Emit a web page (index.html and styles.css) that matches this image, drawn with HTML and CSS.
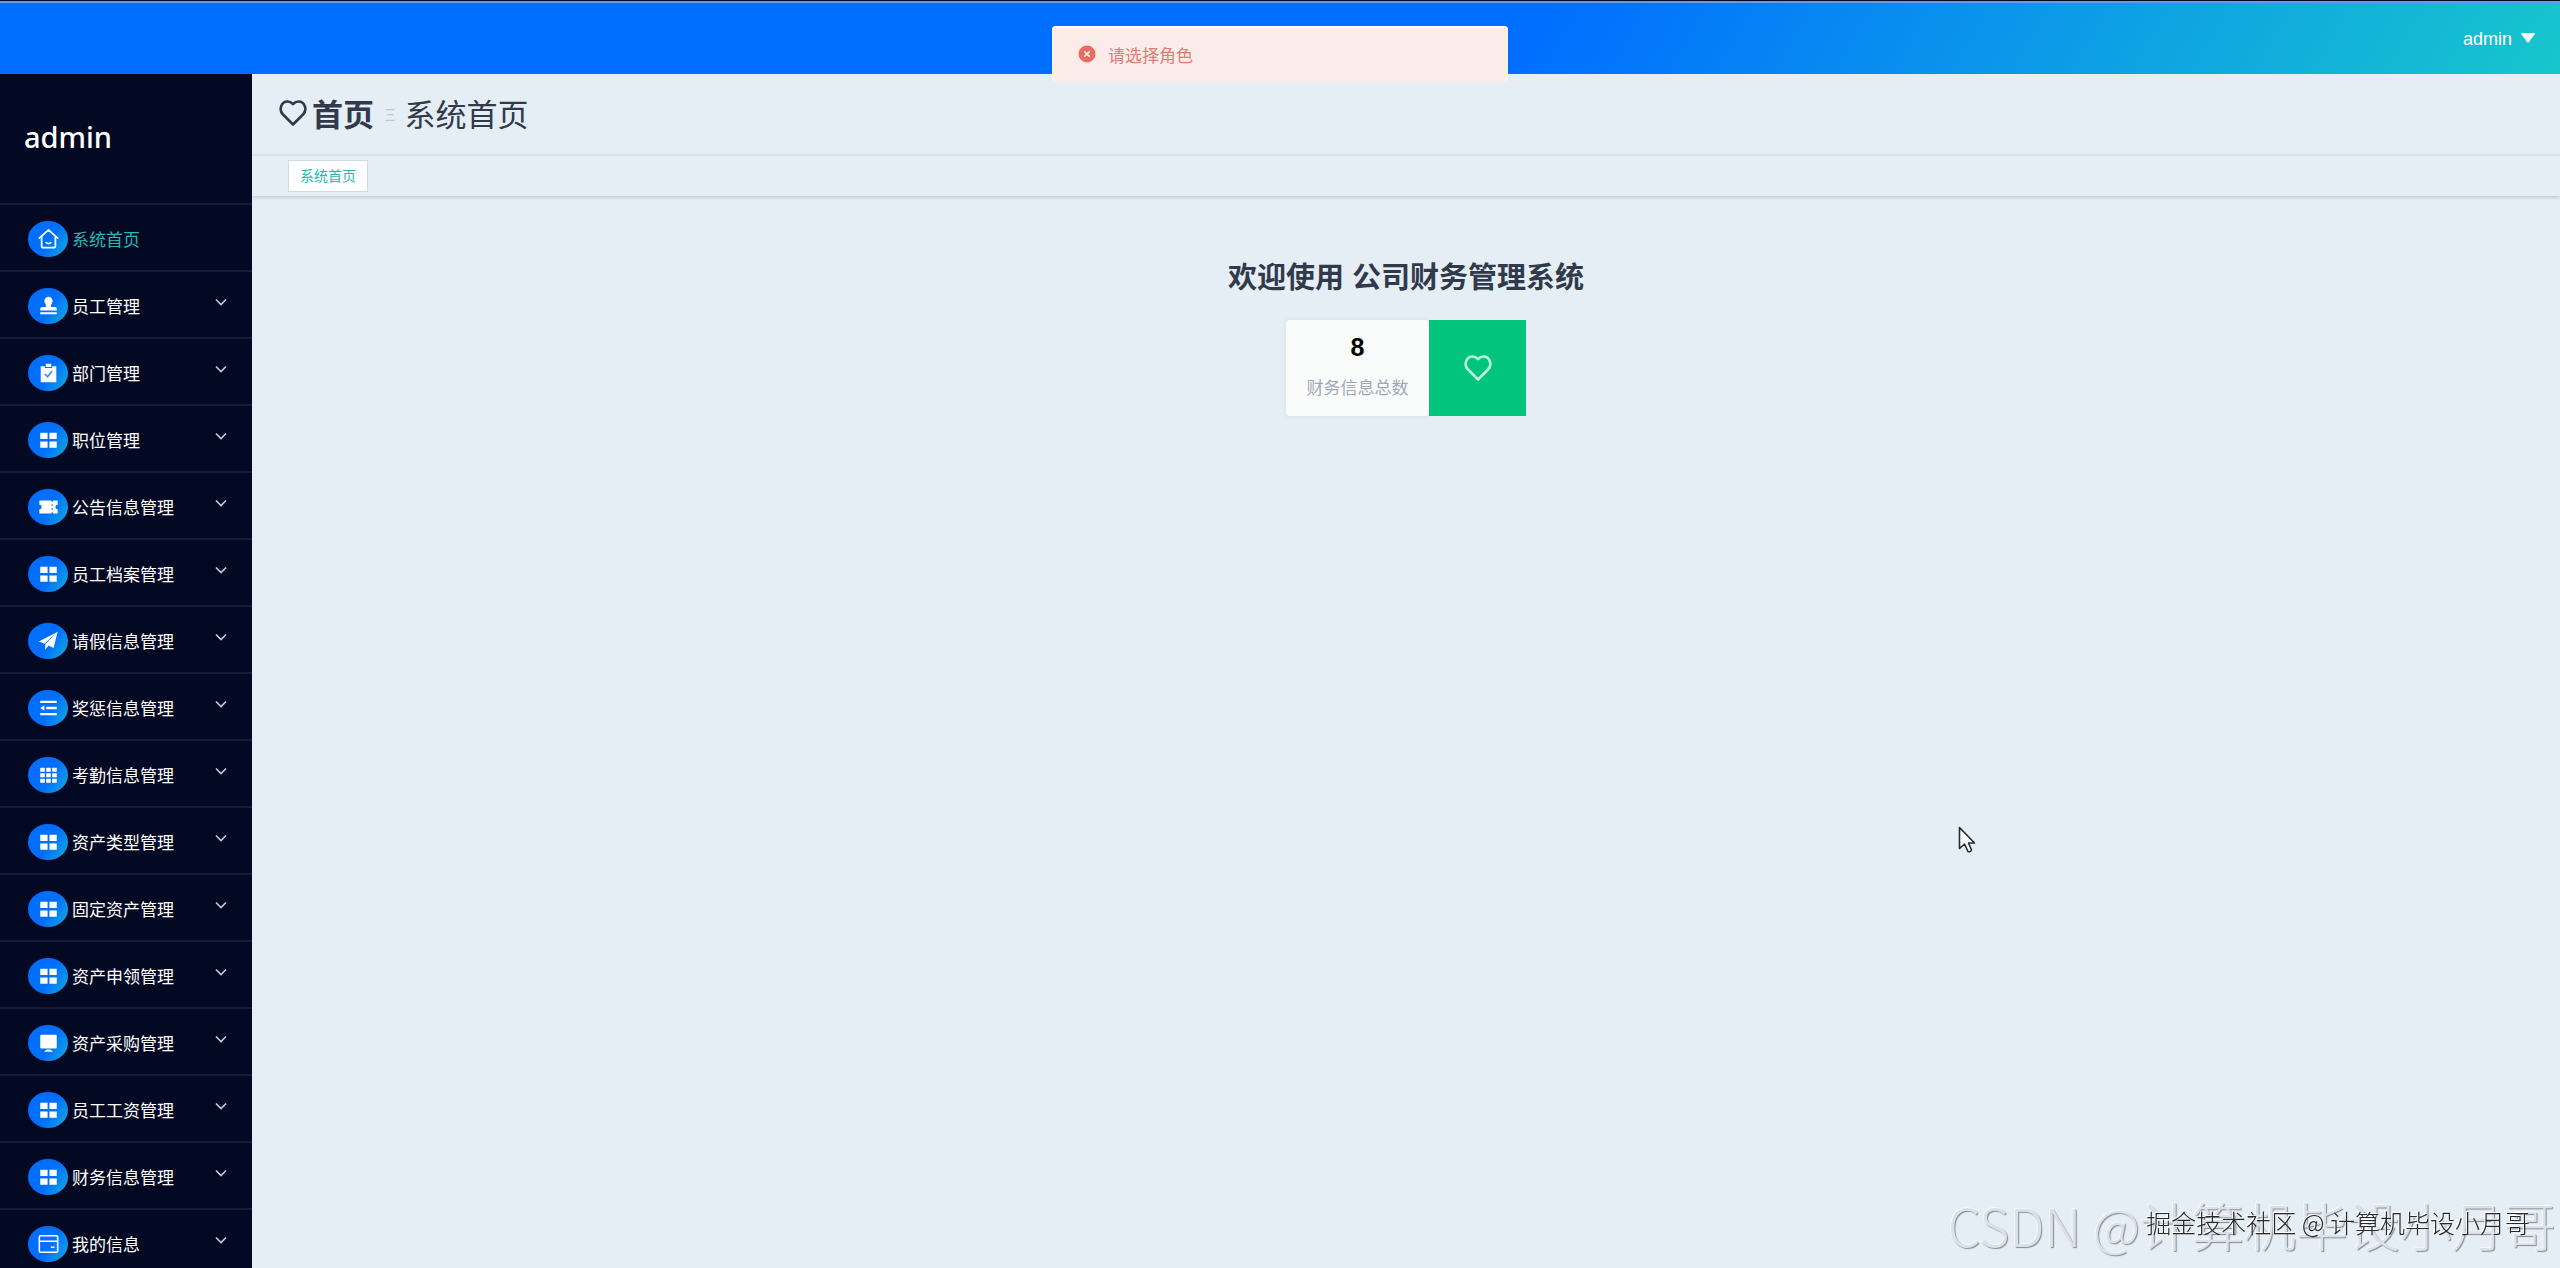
FILE: index.html
```
<!DOCTYPE html>
<html lang="zh-CN">
<head>
  <meta charset="utf-8">
  <title>公司财务管理系统</title>
  <link rel="stylesheet" href="styles.css">
</head>

<body>
<!-- shared icons -->
<svg class="sprite" aria-hidden="true">
  <symbol id="i-house" viewBox="0 0 24 24"><path d="M2 11 12 2l10 9M4.500 9v10.500a2 2 0 0 0 2 2h11a2 2 0 0 0 2-2V9M9.500 16q2.500 2 5 0" fill="none" stroke="currentColor" stroke-width="1.900" stroke-linecap="round" stroke-linejoin="round"/></symbol>
  <symbol id="i-stamp" viewBox="0 0 24 24"><path d="M12 2a4.500 4.500 0 0 1 3.800 7c-1.200 2-1.200 3-1 4H19q2 0 2 2v2H3v-2q0-2 2-2h4.200c.2-1 .2-2-1-4A4.500 4.500 0 0 1 12 2ZM3 18.800h18V21H3Z" fill="currentColor"/></symbol>
  <symbol id="i-claim" viewBox="0 0 24 24"><path d="M3.500 4.500H8v2h8v-2h4.500V22h-17ZM9 2h6v3.500H9Z" fill="currentColor"/><path d="m8 13 3 3 5-6" fill="none" stroke="#1b7cf5" stroke-width="1.500"/></symbol>
  <symbol id="i-menu" viewBox="0 0 24 24"><path d="M3 4h8v7H3ZM13 4h8v7h-8ZM3 13.500h8v7H3ZM13 13.500h8v7h-8Z" fill="currentColor"/></symbol>
  <symbol id="i-ticket" viewBox="0 0 24 24"><path d="M2 5h13l1 2 1-2h5v4.500a2.500 2.500 0 0 0 0 5V19h-5l-1-2-1 2H2v-4.500a2.500 2.500 0 0 0 0-5Z" fill="currentColor"/><path d="M16 9v2M16 13v2" stroke="#1b7cf5" stroke-width="1.200"/></symbol>
  <symbol id="i-plane" viewBox="0 0 24 24"><path d="M22 2 1.500 12.500l6 2.500ZM22 2 8.500 15.500v6l3.500-4.500 5.500 2.500Z" fill="currentColor"/></symbol>
  <symbol id="i-fold" viewBox="0 0 24 24"><path d="M3 4h18v2.500H3ZM9.500 10.700H21v2.600H9.500ZM3 17.500h18V20H3ZM3 12l4.500-3v6Z" fill="currentColor"/></symbol>
  <symbol id="i-grid" viewBox="0 0 24 24"><path d="M3 4h5v4.500H3ZM9.500 4h5v4.500h-5ZM16 4h5v4.500h-5ZM3 10h5v4.500H3ZM9.500 10h5v4.500h-5ZM16 10h5v4.500h-5ZM3 16h5v4.500H3ZM9.500 16h5v4.500h-5ZM16 16h5v4.500h-5Z" fill="currentColor"/></symbol>
  <symbol id="i-monitor" viewBox="0 0 24 24"><path d="M4 3h16q1 0 1 1v13q0 1-1 1H4q-1 0-1-1V4q0-1 1-1ZM10 19h4l3 2.500H7Z" fill="currentColor"/></symbol>
  <symbol id="i-card" viewBox="0 0 24 24"><path d="M3.500 3h17Q22 3 22 4.500v15q0 1.500-1.500 1.500h-17Q2 21 2 19.500v-15Q2 3 3.500 3ZM2 9h20M14.500 15.500h4" fill="none" stroke="currentColor" stroke-width="1.700"/></symbol>
  <symbol id="i-heart" viewBox="0 0 28 26"><path d="M14 24.500 4 14.500C-.5 10 2 1.500 8.500 1.500c2.500 0 4 1 5.500 2.500 1.500-1.500 3-2.500 5.500-2.500 6.500 0 9 8.500 4.500 13Z" fill="none" stroke="currentColor" stroke-width="2.600" stroke-linejoin="round"/></symbol>
  <symbol id="i-down" viewBox="0 0 12 8"><path d="m1 1.500 5 5 5-5" fill="none" stroke="currentColor" stroke-width="1.600"/></symbol>
</svg>

<header class="header">
  <button class="user" type="button">admin
    <svg class="caret" viewBox="0 0 14 10"><path d="M1 0h12q1.500 0 .5 1.500L8 9q-1 1-2 0L.5 1.500Q-.5 0 1 0Z" fill="currentColor"/></svg>
  </button>
</header>

<div class="layout">
  <aside class="sidebar">
    <div class="username">admin</div>
    <nav class="menu">
      <a class="menu-item active" href="#"><span class="icon"><svg><use href="#i-house"/></svg></span>系统首页</a>
      <a class="menu-item" href="#"><span class="icon"><svg><use href="#i-stamp"/></svg></span>员工管理<svg class="arrow"><use href="#i-down"/></svg></a>
      <a class="menu-item" href="#"><span class="icon"><svg><use href="#i-claim"/></svg></span>部门管理<svg class="arrow"><use href="#i-down"/></svg></a>
      <a class="menu-item" href="#"><span class="icon"><svg><use href="#i-menu"/></svg></span>职位管理<svg class="arrow"><use href="#i-down"/></svg></a>
      <a class="menu-item" href="#"><span class="icon"><svg><use href="#i-ticket"/></svg></span>公告信息管理<svg class="arrow"><use href="#i-down"/></svg></a>
      <a class="menu-item" href="#"><span class="icon"><svg><use href="#i-menu"/></svg></span>员工档案管理<svg class="arrow"><use href="#i-down"/></svg></a>
      <a class="menu-item" href="#"><span class="icon"><svg><use href="#i-plane"/></svg></span>请假信息管理<svg class="arrow"><use href="#i-down"/></svg></a>
      <a class="menu-item" href="#"><span class="icon"><svg><use href="#i-fold"/></svg></span>奖惩信息管理<svg class="arrow"><use href="#i-down"/></svg></a>
      <a class="menu-item" href="#"><span class="icon"><svg><use href="#i-grid"/></svg></span>考勤信息管理<svg class="arrow"><use href="#i-down"/></svg></a>
      <a class="menu-item" href="#"><span class="icon"><svg><use href="#i-menu"/></svg></span>资产类型管理<svg class="arrow"><use href="#i-down"/></svg></a>
      <a class="menu-item" href="#"><span class="icon"><svg><use href="#i-menu"/></svg></span>固定资产管理<svg class="arrow"><use href="#i-down"/></svg></a>
      <a class="menu-item" href="#"><span class="icon"><svg><use href="#i-menu"/></svg></span>资产申领管理<svg class="arrow"><use href="#i-down"/></svg></a>
      <a class="menu-item" href="#"><span class="icon"><svg><use href="#i-monitor"/></svg></span>资产采购管理<svg class="arrow"><use href="#i-down"/></svg></a>
      <a class="menu-item" href="#"><span class="icon"><svg><use href="#i-menu"/></svg></span>员工工资管理<svg class="arrow"><use href="#i-down"/></svg></a>
      <a class="menu-item" href="#"><span class="icon"><svg><use href="#i-menu"/></svg></span>财务信息管理<svg class="arrow"><use href="#i-down"/></svg></a>
      <a class="menu-item" href="#"><span class="icon"><svg><use href="#i-card"/></svg></span>我的信息<svg class="arrow"><use href="#i-down"/></svg></a>
    </nav>
  </aside>

  <main class="main">
    <div class="breadcrumb">
      <svg class="heart"><use href="#i-heart"/></svg>
      <a class="crumb-home" href="#">首页</a>
      <span class="separator">Ξ</span>
      <span>系统首页</span>
    </div>
    <div class="tabs">
      <a class="tab" href="#">系统首页</a>
    </div>
    <section class="content">
      <h1 class="welcome">欢迎使用 公司财务管理系统</h1>
      <div class="card">
        <div class="card-info">
          <div class="card-num">8</div>
          <div class="card-label">财务信息总数</div>
        </div>
        <div class="card-icon"><svg class="heart"><use href="#i-heart"/></svg></div>
      </div>
    </section>
  </main>
</div>

<div class="message" role="alert">
  <svg class="message-icon" viewBox="0 0 18 18"><circle cx="9" cy="9" r="8.500" fill="#ec6a5e"/><path d="m6.200 6.200 5.600 5.600M11.800 6.200l-5.600 5.600" stroke="#fff" stroke-width="1.600"/></svg>
  请选择角色
</div>

<svg class="cursor" viewBox="0 0 18 28"><path d="M1.500 1.500v21l5-4.500 3.500 7.500q2.500 1 3.500-1.500L10.500 17H16.500Z" fill="#fff" stroke="#222838" stroke-width="1.600" stroke-linejoin="round"/></svg>

<div class="watermark watermark-large">CSDN @计算机毕设小月哥</div>
<div class="watermark watermark-small">掘金技术社区 @ 计算机毕设小月哥</div>
</body>
</html>
```
FILE: styles.css
```
* {
  box-sizing: border-box;
}

body {
  margin: 0;
  height: 100vh;
  display: flex;
  flex-direction: column;
  overflow: hidden;
  background: #e5edf5;
  color: #303a4b;
  font-family: "Liberation Sans", "Noto Sans CJK SC", sans-serif;
  font-size: 17px;
}

a {
  color: inherit;
  text-decoration: none;
}

.sprite {
  display: none;
}

/* header */
.header {
  flex: none;
  height: 74px;
  padding: 3px 25px 0;
  display: flex;
  justify-content: flex-end;
  align-items: center;
  border-top: 1px solid #060b26;
  box-shadow: inset 0 2px 0 #5d9df0;
  background: linear-gradient(120deg, #006fff 60%, #0c9be8 80%, #17c6cc);
}

.user {
  display: flex;
  align-items: center;
  gap: 9px;
  padding: 0;
  border: 0;
  background: none;
  color: #fff;
  font-family: inherit;
  font-size: 18px;
  cursor: pointer;
}

.caret {
  width: 14px;
  height: 10px;
  margin-bottom: 2px;
}

.layout {
  flex: 1;
  min-height: 0;
  display: flex;
}

/* sidebar */
.sidebar {
  flex: none;
  width: 252px;
  overflow: hidden;
  background: #040923;
  color: #fff;
}

.username {
  height: 129px;
  padding: 0 24px;
  font-family: "Noto Sans", sans-serif;
  font-size: 29px;
  font-weight: 500;
  line-height: 126px;
}

.menu-item {
  display: flex;
  align-items: center;
  height: 67px;
  padding: 1px 25px 0 28px;
  border-top: 2px solid #171c35;
}

.menu-item.active {
  color: #2ab5b4;
}

.icon {
  display: flex;
  align-items: center;
  justify-content: center;
  width: 40px;
  height: 36px;
  margin: 2px 4px 0 0;
  border-radius: 50%;
  background: linear-gradient(120deg, #006fff 55%, #14b0d8);
  color: #fff;
}

.icon svg {
  width: 23px;
  height: 22px;
}

.arrow {
  width: 12px;
  height: 8px;
  margin: 0 0 6px auto;
  color: #c9ccd6;
}

/* main */
.main {
  flex: 1;
  min-width: 0;
  overflow: hidden;
}

.breadcrumb {
  display: flex;
  align-items: center;
  height: 82px;
  padding: 0 27px 3px;
  border-bottom: 2px solid #dce3ea;
  font-size: 31px;
}

.heart {
  width: 28px;
  height: 26px;
}

.crumb-home {
  margin-left: 5px;
  font-weight: bold;
}

.separator {
  margin: 6px 9px 0 11px;
  color: #c0c6cf;
  font-size: 16px;
}

.tabs {
  display: flex;
  align-items: center;
  height: 40px;
  padding: 0 36px;
  box-shadow: 0 2px 3px #c5ced8;
}

.tab {
  padding: 0 11px;
  border: 1px solid #d3d9e0;
  background: #fff;
  color: #2bb5ae;
  font-size: 14px;
  line-height: 30px;
}

.content {
  display: flex;
  flex-direction: column;
  align-items: center;
  padding-top: 60px;
}

.welcome {
  margin: 0 0 20px;
  font-size: 29px;
  line-height: 44px;
}

.card {
  display: flex;
  height: 96px;
}

.card-info {
  width: 143px;
  padding-top: 11px;
  border-radius: 4px;
  background: #fafbfb;
  box-shadow: 0 0 4px #d5dce5;
  text-align: center;
}

.card-num {
  color: #000;
  font-size: 25px;
  font-weight: bold;
  line-height: 32px;
}

.card-label {
  margin-top: 14px;
  color: #a0a8b7;
  line-height: 24px;
}

.card-icon {
  display: flex;
  align-items: center;
  justify-content: center;
  width: 97px;
  background: #02c47b;
  color: #b9f7de;
}

/* message popup, over the header */
.message {
  position: fixed;
  top: 26px;
  left: 50%;
  display: flex;
  align-items: center;
  gap: 12px;
  width: 456px;
  height: 56px;
  padding: 0 26px;
  transform: translateX(-50%);
  border-radius: 4px;
  background: #fbecea;
  box-shadow: inset 0 2px 2px #fff;
  color: #df7c72;
}

.message-icon {
  width: 18px;
  height: 18px;
}

.cursor {
  position: fixed;
  top: 826px;
  left: 1958px;
  width: 18px;
  height: 28px;
}

.watermark {
  position: fixed;
  font-family: "Noto Sans CJK SC", sans-serif;
  font-weight: 300;
  white-space: nowrap;
}

.watermark-large {
  right: 4px;
  bottom: 6px;
  color: #dbe1e8;
  font-size: 52px;
  text-shadow: 1px 1px 1px #858a91, -1px -1px 0 #f4f8fc;
}

.watermark-small {
  right: 30px;
  bottom: 28px;
  color: #25282d;
  font-size: 25px;
  text-shadow: -1px -1px 0 #fff;
}
```
